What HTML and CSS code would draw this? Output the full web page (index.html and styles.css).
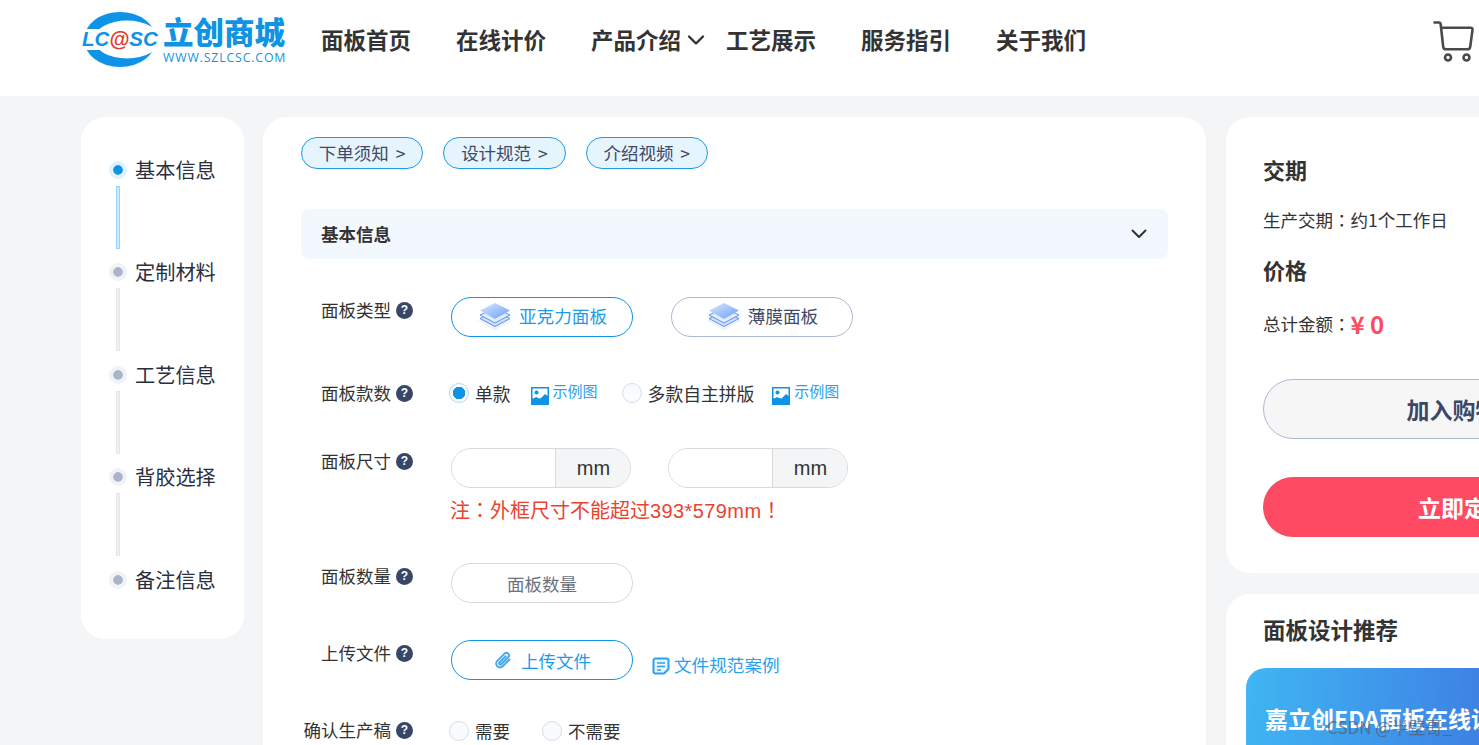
FILE: index.html
```html
<!DOCTYPE html>
<html lang="zh-CN">
<head>
<meta charset="utf-8">
<title>面板</title>
<link rel="stylesheet" href="styles.css">
</head>
<body>
<header class="topbar">
  <a class="logo">
    <svg class="logo-mark" width="78" height="58" viewBox="0 0 78 58">
      <ellipse cx="39" cy="28.500" rx="36" ry="27.500" fill="#0e93e6"/>
      <ellipse cx="46" cy="28.500" rx="33" ry="19" fill="#fff"/>
      <rect x="0" y="18" width="78" height="21" fill="#fff"/>
      <text x="1" y="35" class="logo-lc">LC<tspan class="logo-at">@</tspan>SC</text>
    </svg>
    <span class="logo-text"><span class="logo-cn">立创商城</span><span class="logo-url">WWW.SZLCSC.COM</span></span>
  </a>
  <nav class="nav">
    <a>面板首页</a>
    <a>在线计价</a>
    <a class="has-caret">产品介绍<svg width="18" height="12" viewBox="0 0 18 12"><path d="M2 2.500l7 7 7-7" fill="none" stroke="#333" stroke-width="2.400" stroke-linecap="round" stroke-linejoin="round"/></svg></a>
    <a>工艺展示</a>
    <a>服务指引</a>
    <a>关于我们</a>
  </nav>
  <svg class="cart" width="42" height="44" viewBox="0 0 42 44"><path d="M1.500 2.500h4.500q1.500 0 1.700 1.800l2.500 22.500q.3 2.500 3 2.500h21q2.700 0 3-2.500l2.300-17q.3-2-1.800-2H8" fill="none" stroke="#4a4a4a" stroke-width="2.600" stroke-linecap="round" stroke-linejoin="round"/><circle cx="15" cy="37.500" r="3" fill="none" stroke="#4a4a4a" stroke-width="2.600"/><circle cx="33.500" cy="37.500" r="3" fill="none" stroke="#4a4a4a" stroke-width="2.600"/></svg>
</header>

<div class="layout">
  <aside class="steps card">
    <div class="step active"><span class="dot"></span><span class="step-name">基本信息</span></div>
    <span class="rail active"></span>
    <div class="step"><span class="dot"></span><span class="step-name">定制材料</span></div>
    <span class="rail"></span>
    <div class="step"><span class="dot"></span><span class="step-name">工艺信息</span></div>
    <span class="rail"></span>
    <div class="step"><span class="dot"></span><span class="step-name">背胶选择</span></div>
    <span class="rail"></span>
    <div class="step"><span class="dot"></span><span class="step-name">备注信息</span></div>
  </aside>

  <main class="main card">
    <div class="pills">
      <a class="pill">下单须知 &gt;</a>
      <a class="pill">设计规范 &gt;</a>
      <a class="pill">介绍视频 &gt;</a>
    </div>
    <div class="section-head">
      <span>基本信息</span>
      <svg width="16" height="10" viewBox="0 0 16 10"><path d="M1.500 1.500l6.500 6.500 6.500-6.500" fill="none" stroke="#333" stroke-width="2" stroke-linecap="round" stroke-linejoin="round"/></svg>
    </div>

    <div class="row row-type">
      <div class="label">面板类型<i class="help">?</i></div>
      <div class="ctrl gap-38">
        <button class="choice on"><svg class="stack" width="36" height="30" viewBox="0 0 36 30"><use href="#stack"/></svg>亚克力面板</button>
        <button class="choice"><svg class="stack" width="36" height="30" viewBox="0 0 36 30"><use href="#stack"/></svg>薄膜面板</button>
      </div>
    </div>

    <div class="row row-count">
      <div class="label">面板款数<i class="help">?</i></div>
      <div class="ctrl radios">
        <label class="radio on"><span class="ring"></span>单款</label>
        <a class="sample"><svg width="18" height="18" viewBox="0 0 18 18"><use href="#pic"/></svg><span>示例图</span></a>
        <label class="radio"><span class="ring"></span>多款自主拼版</label>
        <a class="sample"><svg width="18" height="18" viewBox="0 0 18 18"><use href="#pic"/></svg><span>示例图</span></a>
      </div>
    </div>

    <div class="row row-size">
      <div class="label">面板尺寸<i class="help">?</i></div>
      <div class="ctrl col">
        <div class="sizes">
          <div class="size"><span class="size-input"></span><span class="unit">mm</span></div>
          <div class="size"><span class="size-input"></span><span class="unit">mm</span></div>
        </div>
        <p class="note">注<span class="tc" lang="zh-TW">：</span>外框尺寸不能超过<span class="note-num">393*579mm</span><span class="tc" lang="zh-TW">！</span></p>
      </div>
    </div>

    <div class="row row-qty">
      <div class="label">面板数量<i class="help">?</i></div>
      <div class="ctrl"><div class="qty">面板数量</div></div>
    </div>

    <div class="row row-upload">
      <div class="label">上传文件<i class="help">?</i></div>
      <div class="ctrl">
        <button class="upload"><svg width="20" height="20" viewBox="0 0 20 20"><path d="M16.500 9.500l-6.800 6.800a3.800 3.800 0 0 1-5.400-5.400l7.300-7.300a2.500 2.500 0 0 1 3.600 3.600l-7 7a1.200 1.200 0 0 1-1.700-1.700l6.200-6.200" fill="none" stroke="#4aa9ea" stroke-width="2" stroke-linecap="round"/></svg>上传文件</button>
        <a class="spec"><svg width="18" height="18" viewBox="0 0 18 18"><path d="M12 16.500H3.500a2 2 0 0 1-2-2v-11a2 2 0 0 1 2-2h11a2 2 0 0 1 2 2V12l-4.500 4.500z" fill="#e9f5fd" stroke="#2ba1ee" stroke-width="2" stroke-linejoin="round"/><path d="M5 6h8M5 9.500h8M5 13h4" stroke="#2ba1ee" stroke-width="1.600"/></svg>文件规范案例</a>
      </div>
    </div>

    <div class="row row-confirm">
      <div class="label">确认生产稿<i class="help">?</i></div>
      <div class="ctrl radios-2">
        <label class="radio"><span class="ring"></span>需要</label>
        <label class="radio"><span class="ring"></span>不需要</label>
      </div>
    </div>
  </main>

  <div class="side">
    <section class="card summary">
      <h3>交期</h3>
      <p class="line">生产交期<span class="tc" lang="zh-TW">：</span>约1个工作日</p>
      <h3>价格</h3>
      <p class="line total">总计金额<span class="tc" lang="zh-TW">：</span><b>¥ 0</b></p>
      <button class="btn-cart">加入购物车</button>
      <button class="btn-order">立即定制</button>
    </section>
    <section class="card recommend">
      <h3>面板设计推荐</h3>
      <div class="banner">嘉立创EDA面板在线设计</div>
    </section>
  </div>
</div>

<span class="watermark">CSDN @半壁哥_</span>

<svg class="defs" width="0" height="0">
  <defs>
    <linearGradient id="g1" x1="0" y1="0" x2="1" y2="1"><stop offset="0" stop-color="#d9e8ff"/><stop offset="1" stop-color="#6b9ff5"/></linearGradient>
    <g id="stack">
      <path d="M18 10l17 8.500-17 10L1 18.500z" fill="#eef2fb"/>
      <path d="M18 9l15 7.500-15 8-15-8z" fill="#cfe0fb" stroke="#5c94f0" stroke-width="1"/>
      <path d="M18 5.500l15 7.500-15 8-15-8z" fill="#e2ecfd" stroke="#5c94f0" stroke-width="1"/>
      <path d="M18 1l15 7.500-15 8.500-15-8.500z" fill="url(#g1)"/>
    </g>
    <g id="pic">
      <rect width="18" height="18" fill="#0e93e6"/>
      <rect x="1.500" y="1.500" width="15" height="10" fill="#fff"/>
      <circle cx="5.500" cy="5.500" r="2" fill="#0e93e6"/>
      <path d="M0 13l5-3 4 2 5-5 4 3v8H0z" fill="#0e93e6"/>
    </g>
  </defs>
</svg>
</body>
</html>
```
FILE: styles.css
```css
* { box-sizing: border-box; }
html, body { margin: 0; height: 745px; overflow: hidden; }
body {
  position: relative;
  background: #f4f5f7;
  color: #333;
  font-family: "Noto Sans CJK SC", "Liberation Sans", sans-serif;
  font-size: 17.5px;
}
button { font: inherit; background: #fff; cursor: pointer; }
p, h3 { margin: 0; }
.defs { position: absolute; }
.tc { font-family: "Noto Sans CJK TC", sans-serif; }

/* header */
.topbar {
  height: 96px;
  background: #fff;
  display: flex;
  align-items: flex-start;
  padding-left: 81px;
  width: 1479px;
  position: relative;
}
.logo { display: flex; width: 240px; flex: none; padding-top: 11px; }
.logo-mark { flex: none; margin-right: 4px; }
.logo-lc { font: italic bold 20.500px "Liberation Sans", sans-serif; fill: #0e93e6; }
.logo-at { fill: #e8362a; }
.logo-text { display: flex; flex-direction: column; }
.logo-cn { font-size: 30.500px; font-weight: 900; color: #0e93e6; line-height: 32px; white-space: nowrap; width: 122px; margin-top: 4px; }
.logo-url { font: 12.300px/14px "Open Sans", sans-serif; color: #0e93e6; letter-spacing: .85px; white-space: nowrap; margin-top: 4px; }
.nav { display: flex; gap: 45px; padding-top: 20.500px; font-size: 22.500px; font-weight: 700; color: #333; line-height: 36px; white-space: nowrap; }
.has-caret { position: relative; }
.has-caret svg { position: absolute; left: 96px; top: 13px; }
.cart { position: absolute; left: 1433px; top: 20px; }

/* layout */
.layout {
  display: flex;
  align-items: flex-start;
  padding: 21px 0 0 81px;
  width: 1700px;
}
.card { background: #fff; border-radius: 24px; }

/* steps */
.steps {
  width: 163px;
  height: 522px;
  flex: none;
  margin-right: 19px;
  padding: 39.500px 0 0 28px;
  display: flex;
  flex-direction: column;
  font-size: 20.200px;
}
.step { display: flex; align-items: center; height: 26px; color: #2a2f3e; }
.dot { width: 18px; height: 18px; border-radius: 50%; background: #a9b3ca; border: 4px solid #f1f2f6; margin-right: 8px; flex: none; background-clip: padding-box; }
.step.active .dot { background: #0e93e6; border-color: #dff1fd; background-clip: padding-box; }
.step-name { line-height: 26px; }
.rail { width: 4px; height: 63px; margin: 3px 0 10.500px 7px; background: #f1f1f1; border: 1px solid #e6e6e6; }
.rail.active { background: #cfeaff; border-color: #97d4ff; }

/* main */
.main { width: 943px; height: 700px; flex: none; padding: 20px 38px 0; margin-right: 20px; }
.pills { display: flex; gap: 20px; height: 32px; }
.pill {
  display: flex; align-items: center; justify-content: center;
  width: 122.300px; height: 32px; padding-bottom: 2px;
  border: 1px solid #1e9ce8; border-radius: 16px; background: #e5f4fd;
  color: #3e4a68; white-space: nowrap; word-spacing: 3px;
}
.section-head {
  height: 50px; margin-top: 40px; padding: 0 21px 2px 20px;
  display: flex; align-items: center; justify-content: space-between;
  background: #f3f8fe; border-radius: 8px;
  font-weight: 700; font-size: 17.500px; color: #333;
}
.section-head svg { margin-top: 2px; }
.row { display: flex; align-items: flex-start; }
.label {
  width: 112px; flex: none;
  display: flex; justify-content: flex-end; align-items: center;
  white-space: nowrap; height: 24px; color: #333; font-size: 17.500px;
}
.help {
  width: 17px; height: 17px; border-radius: 50%; background: #384668; color: #fff;
  font: bold 12px/17px "Liberation Sans", sans-serif; text-align: center; margin: 2px 0 0 5px; flex: none;
}
.ctrl { margin-left: 38px; display: flex; align-items: flex-start; }
.col { flex-direction: column; }
.row-type { margin-top: 38px; height: 40px; }
.gap-38 { gap: 38px; }
.choice {
  width: 182px; height: 40px; border-radius: 20px; border: 1px solid #aeb8d0;
  display: flex; align-items: center; justify-content: center; color: #3e4a68; font-size: 17.600px;
  padding: 0 0 3px;
}
.choice.on { border-color: #0e93e6; color: #1d9be9; }
.stack { margin-right: 6px; margin-top: 3px; }
.row-count { margin-top: 44px; height: 24px; }
.row-count .label { margin-top: -1px; }
.radios { margin-left: 36px; align-items: center; height: 24px; }
.radio { display: flex; align-items: center; white-space: nowrap; color: #333; font-size: 17.800px; }
.ring {
  width: 20px; height: 20px; border-radius: 50%; border: 1px solid #d4dce9; background: #fafbfe;
  margin-right: 6px; flex: none;
}
.radio.on .ring { border-color: #a9d8f5; background: radial-gradient(circle, #0e93e6 0 6px, #fff 6.500px); }
.sample { display: flex; align-items: flex-start; margin: 0 24px 0 20px; color: #2ba1ee; font-size: 15px; line-height: 20px; white-space: nowrap; }
.sample svg { margin-top: 5px; margin-right: 4px; }
.sample:last-child { margin-right: 0; margin-left: 18px; }
.sample span { margin-top: -1px; }
.row-size { margin-top: 43px; height: 78px; }
.sizes { display: flex; gap: 37px; }
.size { width: 180px; height: 40px; border: 1px solid #d9d9d9; border-radius: 20px; display: flex; overflow: hidden; }
.size-input { width: 104px; background: #fff; border-right: 1px solid #d9d9d9; flex: none; }
.unit { flex: 1; background: #f4f5f7; text-align: center; font: 20px/38px "Liberation Sans", sans-serif; color: #333; padding-left: 1px; }
.note { color: #e8442f; font-size: 20px; line-height: 26px; margin: 9px 0 0 -1px; white-space: nowrap; }
.note-num { font-family: "Liberation Sans", sans-serif; letter-spacing: .4px; }
.row-qty { margin-top: 37px; height: 40px; }
.qty { width: 182px; height: 40px; border: 1px solid #d9d9d9; border-radius: 20px; text-align: center; line-height: 40px; color: #6b7280; font-size: 17.500px; }
.row-upload { margin-top: 37px; height: 40px; }
.upload {
  width: 182px; height: 40px; border: 1px solid #0e93e6; border-radius: 20px;
  display: flex; align-items: center; justify-content: center; color: #1d9be9; font-size: 17.500px; padding: 0;
}
.upload svg { margin-right: 8px; }
.spec { display: flex; align-items: center; margin: 12px 0 0 19px; color: #2ba1ee; font-size: 17.600px; line-height: 26px; white-space: nowrap; }
.spec svg { margin-right: 4px; margin-top: 2px; }
.row-confirm { margin-top: 38px; }
.row-confirm .label { margin-top: -1px; }
.radios-2 { gap: 32px; margin: 1px 0 0 36px; }
.radios-2 .radio { font-size: 17.500px; line-height: 24px; }

/* side */
.side { width: 420px; flex: none; display: flex; flex-direction: column; gap: 21px; }
.summary { height: 456px; padding: 36px 37px 0; }
.summary h3 { font-size: 22px; line-height: 32px; color: #333; font-weight: 700; }
.line { font-size: 17.500px; line-height: 26px; color: #333; margin: 22px 0 20px; white-space: nowrap; }
.total { margin: 23px 0 0; display: flex; align-items: center; height: 32px; }
.total b { color: #ff4a63; font-size: 24px; font-weight: 700; }
.btn-cart, .btn-order { display: block; width: 402px; height: 60px; border-radius: 30px; font-size: 23px; font-weight: 700; text-align: center; white-space: nowrap; padding: 0; }
.btn-cart { background: #f6f6f6; border: 1px solid #aeb8d0; color: #3a4766; margin-top: 39px; }
.btn-order { background: #ff4a63; border: 0; color: #fff; margin-top: 38px; }
.recommend { padding: 18px 0 0 20px; height: 300px; }
.recommend h3 { font-size: 22.500px; line-height: 34px; color: #333; margin-left: 17px; font-weight: 700; }
.banner {
  margin-top: 22px; width: 400px; height: 200px; border-radius: 20px 0 0 0;
  background: linear-gradient(95deg, #3fb6f3, #3d7fe3 60%);
  color: #fff; font-size: 23px; font-weight: 700; padding: 33px 0 0 19px; white-space: nowrap;
}
.watermark { position: absolute; left: 1327px; top: 716px; color: rgba(85,90,100,.7); font-size: 17px; line-height: 22px; white-space: nowrap; }
```
